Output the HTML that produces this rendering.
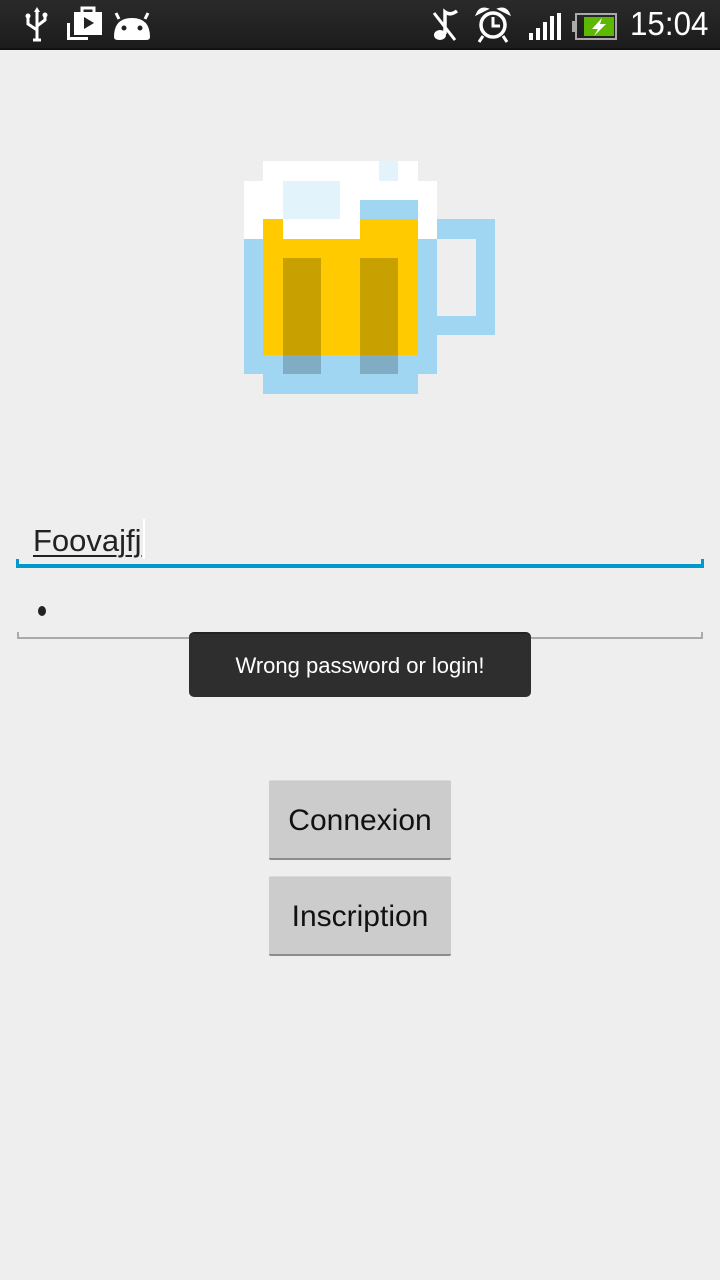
<!DOCTYPE html>
<html><head><meta charset="utf-8"><style>
html,body{margin:0;padding:0;width:720px;height:1280px;background:#eeeeee;overflow:hidden;font-family:"Liberation Sans",sans-serif;}
.sb{position:absolute;left:0;top:0;width:720px;height:48px;background:linear-gradient(#2a2a2a,#1c1c1c);border-bottom:2px solid #111;}
.time{position:absolute;left:630px;top:5px;font-size:33px;color:#fff;transform:scaleX(0.95);transform-origin:left;}
.abs{position:absolute;}
.btn{position:absolute;left:269px;width:182px;height:77px;background:#cccccc;border-bottom:2px solid #8c8c8c;border-radius:2px;font-size:30px;color:#111;text-align:center;line-height:79px;box-shadow:0 -1px 0 #d8d8d8;}
</style></head><body>
<div class="sb">
<svg class="abs" style="left:0;top:0" width="420" height="48" fill="#fff" stroke="#fff">
 <g stroke-width="3" fill="none" stroke-linecap="round"><path d="M37 12 V40 M37 30 L28 24 V18 M37 26 L45 20 V16"/></g>
 <circle cx="28" cy="16" r="2.5" stroke="none"/><circle cx="45" cy="15" r="2.5" stroke="none"/><path d="M33 40h8" stroke-width="3"/>
 <path d="M37 7 l-3 5 h6z" stroke="none"/>
 <rect x="67" y="23" width="3" height="17" stroke="none"/><rect x="67" y="37" width="21" height="3" stroke="none"/>
 <rect x="74" y="12" width="28" height="23" stroke="none"/><path d="M82 12 V8 h12 V12" fill="none" stroke-width="3"/>
 <path d="M84 17 L94 23 L84 29z" fill="#222" stroke="none"/>
 <path d="M114 37 Q114 18 132 18 Q150 18 150 37 Q150 40 146 40 H118 Q114 40 114 37z" stroke="none"/>
 <path d="M119 19 l-3 -6 M145 19 l3 -6" stroke-width="3"/>
 <circle cx="124" cy="28" r="2.5" fill="#222" stroke="none"/><circle cx="140" cy="28" r="2.5" fill="#222" stroke="none"/>
</svg>
<svg class="abs" style="left:420px;top:0" width="210" height="48" fill="#fff" stroke="#fff">
 <path d="M14 13 L35 40" stroke-width="3"/>
 <ellipse cx="20" cy="35" rx="6" ry="5" stroke="none"/><path d="M25 34 V12 Q30 16 37 11" fill="none" stroke-width="3.5"/>
 <circle cx="73" cy="25" r="12" fill="none" stroke-width="3.5"/><path d="M73 17 V26 H80" fill="none" stroke-width="3"/>
 <path d="M57 14 Q60 7 67 9z M89 14 Q86 7 79 9z" stroke-width="2"/><path d="M63 36 l-4 6 M83 36 l4 6" stroke-width="3"/>
 <rect x="109" y="33" width="4" height="7" stroke="none"/><rect x="116" y="28" width="4" height="12" stroke="none"/><rect x="123" y="22" width="4" height="18" stroke="none"/><rect x="130" y="16" width="4" height="24" stroke="none"/><rect x="137" y="13" width="4" height="27" stroke="none"/>
 <rect x="156" y="14" width="40" height="25" fill="none" stroke="#aaa" stroke-width="2"/><rect x="152" y="21" width="4" height="11" fill="#aaa" stroke="none"/>
 <rect x="164" y="17" width="30" height="19" fill="#5cb800" stroke="none"/><path d="M182 18 L172 29 H178 L174 36 L186 24 H180z" stroke="none"/>
</svg>
<div class="time">15:04</div>
</div>

<svg class="abs" style="left:0;top:0" width="720" height="420" shape-rendering="crispEdges">
 <rect x="263" y="161" width="155" height="20" fill="#fff"/>
 <rect x="379" y="161" width="19" height="20" fill="#e3f3fb"/>
 <rect x="244" y="181" width="193" height="58" fill="#fff"/>
 <rect x="283" y="181" width="57" height="38" fill="#e3f3fb"/>
 <rect x="360" y="200" width="58" height="19" fill="#a0d6f2"/>
 <rect x="244" y="239" width="193" height="135" fill="#a0d6f2"/>
 <rect x="263" y="374" width="155" height="20" fill="#a0d6f2"/>
 <rect x="437" y="219" width="58" height="116" fill="#a0d6f2"/>
 <rect x="437" y="239" width="39" height="77" fill="#eeeeee"/>
 <rect x="263" y="219" width="155" height="136" fill="#ffca00"/>
 <rect x="283" y="219" width="77" height="20" fill="#fff"/>
 <rect x="283" y="258" width="38" height="97" fill="#c8a000"/>
 <rect x="360" y="258" width="38" height="97" fill="#c8a000"/>
 <rect x="283" y="355" width="38" height="19" fill="#80acc4"/>
 <rect x="360" y="355" width="38" height="19" fill="#80acc4"/>
</svg>

<div class="abs" style="left:33px;top:523px;font-size:31px;color:#222;text-decoration:underline;text-decoration-thickness:2px;text-underline-offset:4px;">Foovajfj</div>
<div class="abs" style="left:143px;top:519px;width:2px;height:40px;background:#fff"></div>
<div class="abs" style="left:16px;top:564px;width:688px;height:4px;background:#0099cc"></div>
<div class="abs" style="left:16px;top:559px;width:3px;height:8px;background:#0099cc"></div>
<div class="abs" style="left:701px;top:559px;width:3px;height:8px;background:#0099cc"></div>

<div class="abs" style="left:38px;top:606px;width:8px;height:10px;border-radius:50%;background:#222"></div>
<div class="abs" style="left:17px;top:637px;width:686px;height:2px;background:#aaa"></div>
<div class="abs" style="left:17px;top:632px;width:2px;height:6px;background:#aaa"></div>
<div class="abs" style="left:701px;top:632px;width:2px;height:6px;background:#aaa"></div>

<div class="abs" style="left:189px;top:632px;width:342px;height:65px;background:#2e2e2e;border-radius:5px;border-top:2px solid #232323;box-sizing:border-box;color:#fff;font-size:22px;text-align:center;line-height:64px;">Wrong password or login!</div>

<div class="btn" style="top:781px">Connexion</div>
<div class="btn" style="top:877px">Inscription</div>
</body></html>
